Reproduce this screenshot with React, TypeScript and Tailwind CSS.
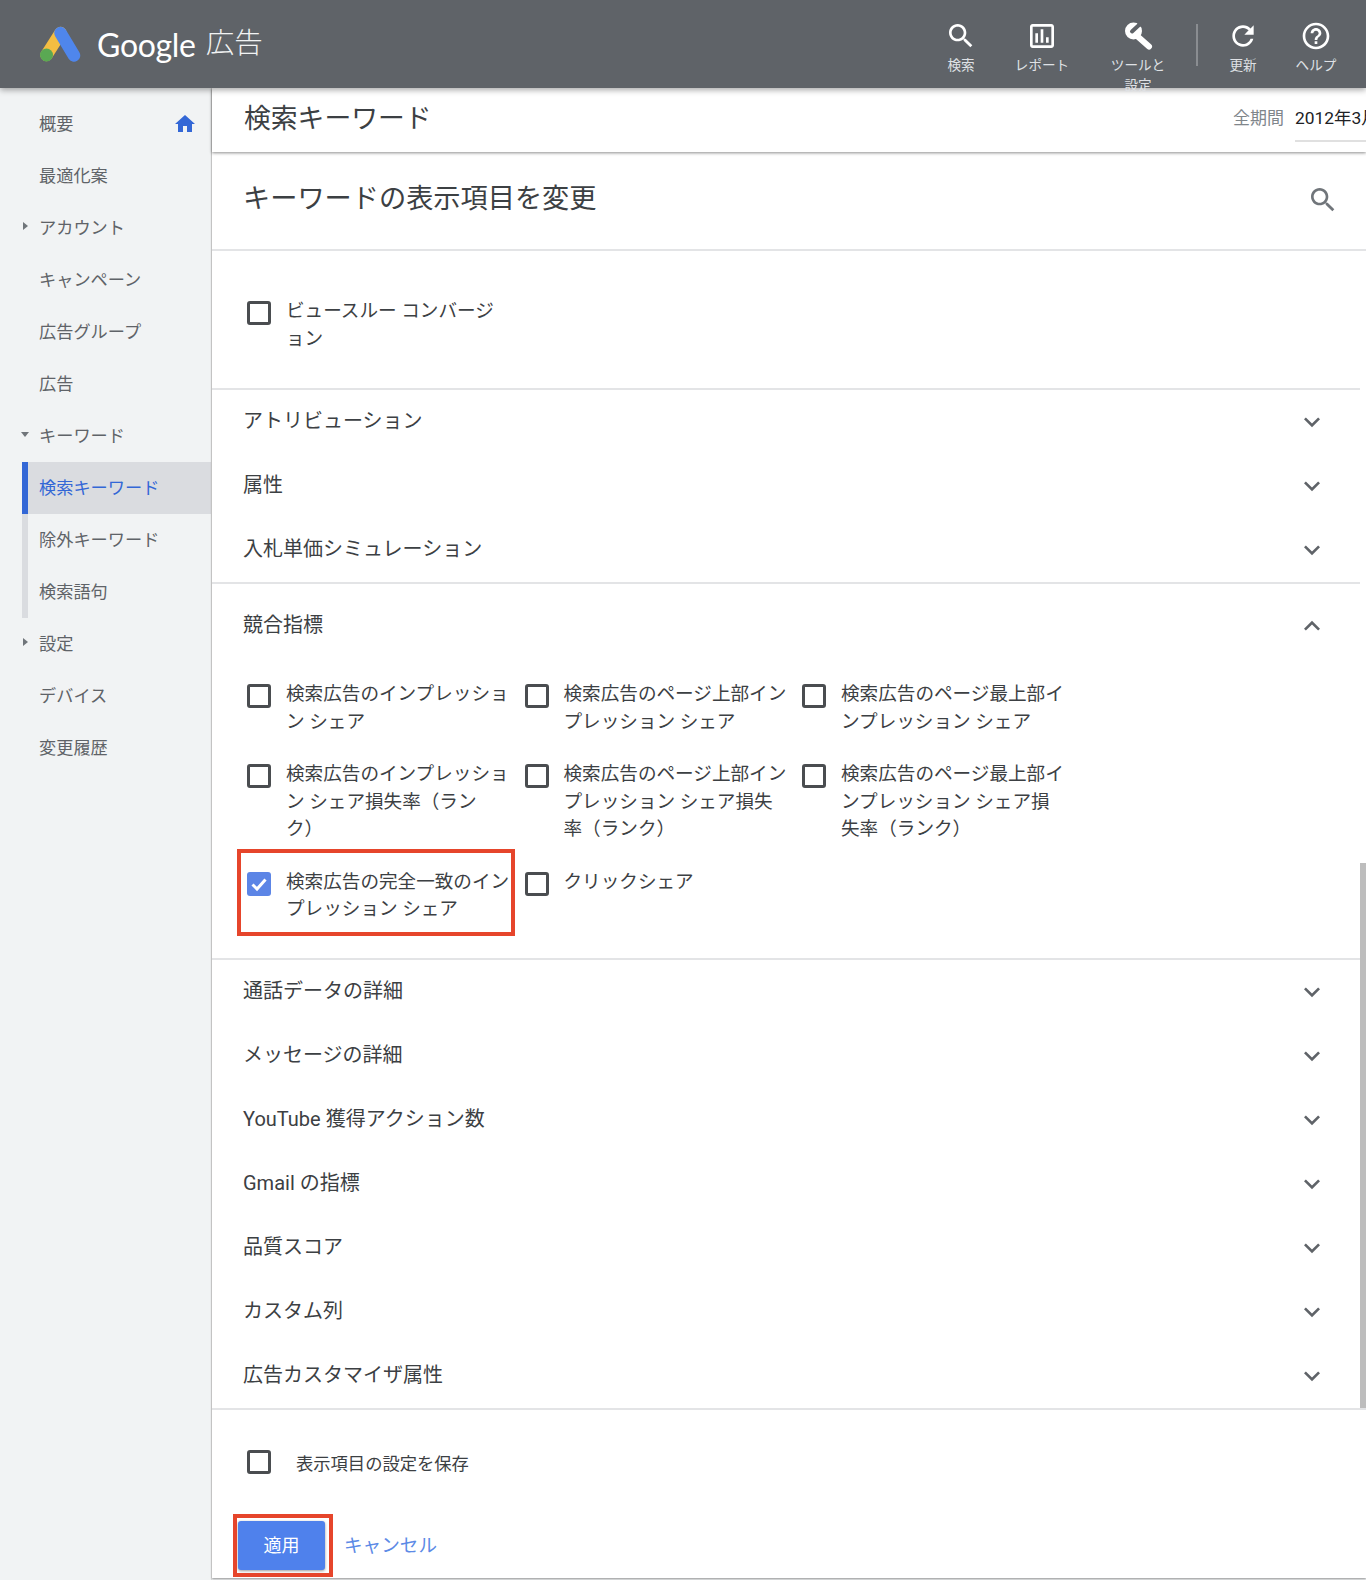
const ICONS: Record<string, string> = {
  search:
    "M15.5 14h-.79l-.28-.27C15.41 12.59 16 11.11 16 9.5 16 5.91 13.09 3 9.5 3S3 5.91 3 9.5 5.91 16 9.5 16c1.61 0 3.09-.59 4.23-1.57l.27.28v.79l5 4.99L20.49 19l-4.99-5zm-6 0C7.01 14 5 11.99 5 9.5S7.01 5 9.5 5 14 7.01 14 9.5 11.99 14 9.5 14z",
  report:
    "M19 3H5c-1.1 0-2 .9-2 2v14c0 1.1.9 2 2 2h14c1.1 0 2-.9 2-2V5c0-1.1-.9-2-2-2zm0 16H5V5h14v14zM7 10h2v7H7zm4-3h2v10h-2zm4 6h2v4h-2z",
  refresh:
    "M17.65 6.35C16.2 4.9 14.21 4 12 4c-4.42 0-7.99 3.58-7.99 8s3.57 8 7.99 8c3.73 0 6.84-2.55 7.73-6h-2.08c-.82 2.33-3.04 4-5.65 4-3.31 0-6-2.69-6-6s2.69-6 6-6c1.66 0 3.14.69 4.22 1.78L13 11h7V4l-2.35 2.35z",
  help: "M11 18h2v-2h-2v2zm1-16C6.48 2 2 6.48 2 12s4.48 10 10 10 10-4.48 10-10S17.52 2 12 2zm0 18c-4.41 0-8-3.59-8-8s3.59-8 8-8 8 3.59 8 8-3.59 8-8 8zm0-14c-2.21 0-4 1.79-4 4h2c0-1.1.9-2 2-2s2 .9 2 2c0 2-3 1.75-3 5h2c0-2.25 3-2.5 3-5 0-2.21-1.79-4-4-4z",
  home: "M10 20v-6h4v6h5v-8h3L12 3 2 12h3v8z",
  down: "M16.59 8.59L12 13.17 7.41 8.59 6 10l6 6 6-6z",
  up: "M12 8l-6 6 1.41 1.41L12 10.83l4.59 4.58L18 14z",
};

const Icon = ({ name, className }: { name: string; className: string }) => {
  // the wrench in the top bar has a round head with a slot cut into it
  if (name === "tools") {
    return (
      <svg viewBox="0 0 32 32" fill="none" className={className}>
        <circle cx="11.5" cy="11" r="8.5" fill="currentColor" />
        <path d="M14 15 L27 26.5" stroke="currentColor" strokeWidth="6" strokeLinecap="round" />
        <path d="M10 11.5 L17 5" stroke="#5f6368" strokeWidth="4" strokeLinecap="round" />
        <path d="M17 5 L21 1" stroke="#5f6368" strokeWidth="5" />
      </svg>
    );
  }
  return (
    <svg viewBox="0 0 24 24" fill="currentColor" className={className}>
      <path d={ICONS[name]} />
    </svg>
  );
};

const Logo = () => (
  <svg viewBox="0 0 44 40" className="w-[44px] h-[40px]">
    <path d="M22.5 9 L8.5 31" stroke="#f4bd42" strokeWidth="12.5" strokeLinecap="round" />
    <path d="M22.5 9 L36 31.5" stroke="#4f86ec" strokeWidth="12.5" strokeLinecap="round" />
    <circle cx="8.5" cy="31" r="6.5" fill="#5aa853" />
  </svg>
);

const Checkbox = ({ checked }: { checked?: boolean }) =>
  checked ? (
    <span className="block w-[24px] h-[24px] shrink-0 rounded-[3px] bg-[#5c85e6]">
      <svg viewBox="0 0 24 24" className="w-[24px] h-[24px]" fill="none" stroke="#ffffff" strokeWidth="3">
        <path d="M5.5 12.5 L10 17 L18.5 7.5" />
      </svg>
    </span>
  ) : (
    <span className="block w-[24px] h-[24px] shrink-0 rounded-[3px] border-[3px] border-[#4a4d50] bg-white" />
  );

const CheckItem = ({ label, checked }: { label: string; checked?: boolean }) => (
  <div className="flex items-start gap-[15px] pl-[3px]">
    <div className="pt-[3px] shrink-0">
      <Checkbox checked={checked} />
    </div>
    <div className="whitespace-pre-line text-[18.6px] leading-[27.7px] text-[#3c4043]">{label}</div>
  </div>
);

const Row = ({ label, open }: { label: string; open?: boolean }) => (
  <div className="h-[64px] flex items-center justify-between pl-[31px] pr-[32px]">
    <span className="-mt-[2px] text-[20px] text-[#3c4043]">{label}</span>
    <Icon name={open ? "up" : "down"} className="w-[32px] h-[32px] text-[#5f6368]" />
  </div>
);

const Divider = () => <div className="h-[2px] bg-[#e3e4e6]" />;

const NavButton = ({ icon, label, width }: { icon: string; label: string; width: string }) => (
  <div className={`${width} flex flex-col items-center pt-[20px]`}>
    <Icon name={icon} className="w-[32px] h-[32px] text-white" />
    <div className="mt-[3px] text-center text-[13.6px] leading-[20px] text-[#dfe1e5] w-[56px]">{label}</div>
  </div>
);

const SideItem = ({ label, arrow }: { label: string; arrow?: "right" | "down" }) => (
  <div className="h-[52px] pt-[2px] flex items-center text-[17.2px] text-[#5f6368]">
    <span className="w-[39px] flex justify-end pr-[11px] -mt-[6px]">
      {arrow === "right" && (
        <span className="border-y-[4px] border-y-transparent border-l-[5px] border-l-[#70757a]" />
      )}
      {arrow === "down" && (
        <span className="border-x-[4px] border-x-transparent border-t-[5px] border-t-[#70757a] -mr-[1px]" />
      )}
    </span>
    {label}
  </div>
);

const competitive = [
  "検索広告のインプレッショ\nン シェア",
  "検索広告のページ上部イン\nプレッション シェア",
  "検索広告のページ最上部イ\nンプレッション シェア",
  "検索広告のインプレッショ\nン シェア損失率（ラン\nク）",
  "検索広告のページ上部イン\nプレッション シェア損失\n率（ランク）",
  "検索広告のページ最上部イ\nンプレッション シェア損\n失率（ランク）",
];

const lowerRows = [
  "通話データの詳細",
  "メッセージの詳細",
  "YouTube 獲得アクション数",
  "Gmail の指標",
  "品質スコア",
  "カスタム列",
  "広告カスタマイザ属性",
];

export default function App() {
  return (
    <div className="w-[1366px] h-[1580px] overflow-hidden flex flex-col bg-[#f1f3f4] font-['Roboto','Noto_Sans_CJK_JP',sans-serif]">
      {/* Header */}
      <header className="relative z-20 h-[88px] shrink-0 bg-[#5f6368] shadow-[0_2px_6px_rgba(0,0,0,0.35)] flex justify-between pr-[12px]">
        <div className="flex items-center pl-[38px]">
          <Logo />
          <span className="ml-[15px] mt-[2px] text-[32px] text-white font-['Lato','Roboto',sans-serif] -tracking-[0.3px]">
            Google
          </span>
          <span className="ml-[10px] text-[28.5px] font-light text-[#f1f3f4]">広告</span>
        </div>
        <div className="flex items-start">
          <NavButton icon="search" label="検索" width="w-[70px]" />
          <NavButton icon="report" label="レポート" width="w-[92px]" />
          <NavButton icon="tools" label="ツールと設定" width="w-[100px]" />
          <div className="w-[2px] h-[42px] mt-[24px] ml-[8px] mr-[10px] bg-[#8a8d91]" />
          <NavButton icon="refresh" label="更新" width="w-[70px]" />
          <NavButton icon="help" label="ヘルプ" width="w-[76px]" />
        </div>
      </header>

      <div className="flex flex-1 min-h-0">
        {/* Sidebar */}
        <nav className="w-[212px] shrink-0 pt-[10px] border-r-[1px] border-[#e0e0e0]">
          <div className="h-[52px] flex items-center justify-between pl-[39px] pr-[14px] text-[17.2px] text-[#5f6368]">
            <span className="pt-[2px]">概要</span>
            <Icon name="home" className="w-[24px] h-[24px] text-[#3367d6]" />
          </div>
          <SideItem label="最適化案" />
          <SideItem label="アカウント" arrow="right" />
          <SideItem label="キャンペーン" />
          <SideItem label="広告グループ" />
          <SideItem label="広告" />
          <SideItem label="キーワード" arrow="down" />
          <div className="ml-[22px] border-l-[6px] border-[#dadce0]">
            <div className="-ml-[6px] h-[52px] pt-[2px] flex items-center border-l-[6px] border-[#3367d6] bg-[#dadce0] pl-[11px] text-[17.2px] text-[#3367d6]">
              検索キーワード
            </div>
            <div className="h-[52px] pt-[2px] flex items-center pl-[11px] text-[17.2px] text-[#5f6368]">除外キーワード</div>
            <div className="h-[52px] pt-[2px] flex items-center pl-[11px] text-[17.2px] text-[#5f6368]">検索語句</div>
          </div>
          <SideItem label="設定" arrow="right" />
          <SideItem label="デバイス" />
          <SideItem label="変更履歴" />
        </nav>

        {/* Main */}
        <main className="flex-1 min-w-0 flex flex-col bg-white h-[1490px] shadow-[0_1px_2px_rgba(0,0,0,0.4)]">
          <div className="relative z-10 h-[64px] shrink-0 flex justify-between pl-[32px] shadow-[0_1px_3px_rgba(0,0,0,0.45)] overflow-hidden">
            <h1 className="pt-[1px] text-[26.8px] leading-[60px] text-[#3c4043]">検索キーワード</h1>
            <div className="flex items-start pt-[18px] -mr-[32px] w-[165px] whitespace-nowrap">
              <span className="text-[17px] leading-[24px] text-[#80868b]">全期間</span>
              <div className="ml-[11px] flex-1 h-[36px] border-b-2 border-[#e0e0e0] text-[17.4px] leading-[24px] text-[#202124] overflow-hidden">
                2012年3月
              </div>
            </div>
          </div>

          <div className="h-[97px] shrink-0 flex items-center justify-between pl-[31px] pr-[27px] pb-[2px]">
            <h2 className="text-[27.2px] text-[#3c4043]">キーワードの表示項目を変更</h2>
            <Icon name="search" className="w-[32px] h-[32px] text-[#70757a]" />
          </div>
          <Divider />

          <div className="flex h-[1157px] shrink-0">
            <div className="flex-1 min-w-0">
              <div className="h-[137px] pt-[47px] pl-[32px]">
                <CheckItem label={"ビュースルー コンバージ\nョン"} />
              </div>
              <Divider />
              <Row label="アトリビューション" />
              <Row label="属性" />
              <Row label="入札単価シミュレーション" />
              <Divider />

              <div className="pt-[10px]">
                <Row label="競合指標" open />
              </div>
              <div className="h-[300px] pt-[23px] pl-[32px]">
                <div className="grid grid-cols-[277.5px_277.5px_277.5px] gap-y-[24.5px]">
                  {competitive.map((label) => (
                    <CheckItem key={label} label={label} />
                  ))}
                  <div className="relative">
                    <CheckItem label={"検索広告の完全一致のイン\nプレッション シェア"} checked />
                    {/* annotation box */}
                    <div className="absolute -left-[7px] -top-[20px] w-[278px] h-[87px] border-[4.5px] border-[#e6452b]" />
                  </div>
                  <CheckItem label="クリックシェア" />
                </div>
              </div>
              <Divider />
              {lowerRows.map((label) => (
                <Row key={label} label={label} />
              ))}
            </div>
            {/* scrollbar */}
            <div className="w-[6px] shrink-0 flex flex-col">
              <div className="h-[612px]" />
              <div className="flex-1 bg-[#bdbdbd]" />
            </div>
          </div>
          <Divider />

          <div className="flex items-start pl-[35px] pt-[40px]">
            <Checkbox />
            <span className="ml-[25px] pt-[2px] text-[17.3px] leading-[24px] text-[#3c4043]">表示項目の設定を保存</span>
          </div>
          <div className="flex items-center pl-[26px] pt-[45px]">
            <div className="relative">
              <button className="w-[87px] h-[49px] rounded-[3px] bg-[#4f81ec] text-[18px] text-white shadow-[0_1px_3px_rgba(0,0,0,0.4)]">
                適用
              </button>
              {/* annotation box */}
              <div className="absolute -left-[5px] -top-[7px] w-[100px] h-[63px] border-[4.5px] border-[#e6452b]" />
            </div>
            <span className="ml-[19px] mt-[3px] text-[18.6px] text-[#5c8ae6]">キャンセル</span>
          </div>
        </main>
      </div>
    </div>
  );
}
